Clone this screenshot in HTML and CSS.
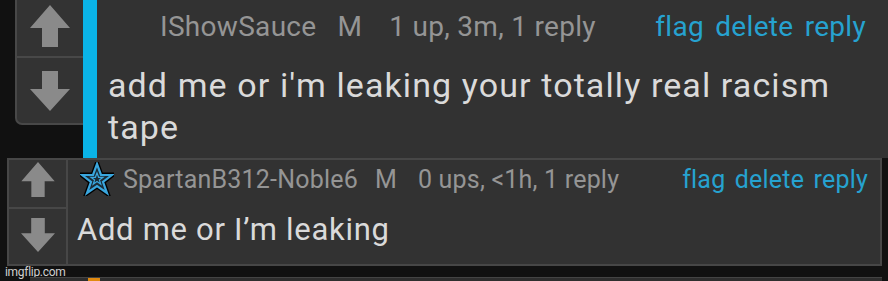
FILE: index.html
```html
<!DOCTYPE html>
<html lang="en">
<head>
    <link rel="stylesheet" href="styles.css">
</head>
<body>
    <div class="thread">
        <div class="comment-row first">
            <div class="votes votes-big">
                <div class="vote up">
                    <svg width="40" height="42" viewBox="0 0 40 42"><path d="M20 0 L40 23 L28 23 L28 42 L12 42 L12 23 L0 23 Z" fill="#8a8a8a"/></svg>
                </div>
                <div class="vote down">
                    <svg width="40" height="40" viewBox="0 0 40 40"><path d="M12 0 L28 0 L28 18 L40 18 L20 40 L0 18 L12 18 Z" fill="#8a8a8a"/></svg>
                </div>
            </div>
            <div class="comment comment-big">
                <div class="comment-head">
                    <div class="meta">
                        <span class="user">IShowSauce</span>
                        <span class="gender">M</span>
                        <span class="stats">1 up, 3m, 1 reply</span>
                    </div>
                    <div class="links">
                        <a>flag</a> <a>delete</a> <a>reply</a>
                    </div>
                </div>
                <div class="comment-text">add me or i'm leaking your totally real racism tape</div>
            </div>
        </div>

        <div class="comment-row second">
            <div class="votes votes-small">
                <div class="vote up">
                    <svg width="34" height="35" viewBox="0 0 40 42"><path d="M20 0 L40 23 L28 23 L28 42 L12 42 L12 23 L0 23 Z" fill="#8a8a8a"/></svg>
                </div>
                <div class="vote down">
                    <svg width="34" height="34" viewBox="0 0 40 40"><path d="M12 0 L28 0 L28 18 L40 18 L20 40 L0 18 L12 18 Z" fill="#8a8a8a"/></svg>
                </div>
            </div>
            <div class="comment comment-small">
                <div class="comment-head">
                    <div class="meta">
                        <svg class="star" width="34" height="34" viewBox="0 0 34 34">
                            <polygon points="17,2 21,13 32,13 23,20 27,31 17,24 7,31 11,20 2,13 13,13" fill="#1c2c36" stroke="#000" stroke-width="5" stroke-linejoin="miter"/>
                            <polygon points="17,2 21,13 32,13 23,20 27,31 17,24 7,31 11,20 2,13 13,13" fill="#1c2c36" stroke="#3aa6dd" stroke-width="2.2"/>
                            <polygon points="17,11 18.6,15.3 23,15.3 19.4,18 20.8,22.3 17,19.6 13.2,22.3 14.6,18 11,15.3 15.4,15.3" fill="none" stroke="#3aa6dd" stroke-width="1.2"/>
                        </svg>
                        <span class="user">SpartanB312-Noble6</span>
                        <span class="gender">M</span>
                        <span class="stats">0 ups, &lt;1h, 1 reply</span>
                    </div>
                    <div class="links">
                        <a>flag</a> <a>delete</a> <a>reply</a>
                    </div>
                </div>
                <div class="comment-text">Add me or I’m leaking</div>
            </div>
        </div>

        <div class="footer">
            <span class="watermark">imgflip.com</span>
        </div>
        <div class="next-card">
            <span class="next-bar"></span>
        </div>
    </div>
</body>
</html>
```

FILE: styles.css
```css
html, body {
    margin: 0;
    padding: 0;
}

body {
    background-color: #111;
    font-family: Roboto, "Liberation Sans", sans-serif;
    width: 888px;
    height: 281px;
    overflow: hidden;
}

.thread {
    display: flex;
    flex-direction: column;
}

.comment-row {
    display: flex;
}

/* first comment */
.comment-row.first {
    height: 158px;
    padding-left: 15px;
    align-items: flex-start;
}

.votes {
    display: flex;
    flex-direction: column;
    background-color: #333;
}

.votes-big {
    width: 68px;
    height: 125px;
    border-left: 2px solid #484848;
    border-bottom: 2px solid #484848;
    border-bottom-left-radius: 7px;
    box-sizing: border-box;
}

.vote {
    display: flex;
    justify-content: center;
    align-items: center;
}

.votes-big .vote {
    height: 58px;
}

.votes-big .vote.up {
    border-bottom: 2px solid #484848;
    align-items: flex-start;
    padding-top: 5px;
    box-sizing: border-box;
}

.votes-big .vote.down {
    flex: 1;
    align-items: flex-start;
    padding-top: 13px;
    box-sizing: border-box;
}

.comment {
    flex: 1;
    background-color: #323232;
    box-sizing: border-box;
}

.comment-big {
    height: 158px;
    border-left: 14px solid #0ab4e8;
    padding: 0 22px 0 11px;
}

.comment-head {
    display: flex;
    justify-content: space-between;
    align-items: center;
}

.meta {
    display: flex;
    align-items: center;
    color: #959595;
}

.links a {
    color: #26a2d0;
    margin-left: 4px;
}

.comment-big .comment-head {
    height: 52px;
    padding-left: 52px;
    font-size: 28px;
    letter-spacing: 0.3px;
}

.comment-big .gender {
    margin-left: 21px;
}

.comment-big .stats {
    margin-left: 27px;
}

.comment-text {
    color: #dadada;
}

.comment-big .comment-text {
    font-size: 34px;
    letter-spacing: 1.1px;
    line-height: 42px;
    padding-top: 12px;
}

/* second comment */
.comment-row.second {
    margin-left: 7px;
    width: 875px;
    height: 108px;
    border: 2px solid #474747;
    box-sizing: border-box;
    background-color: #323232;
}

.votes-small {
    width: 59px;
    border-right: 2px solid #474747;
    box-sizing: border-box;
}

.votes-small .vote {
    height: 49px;
}

.votes-small .vote.up {
    border-bottom: 2px solid #474747;
    align-items: flex-start;
    padding-top: 2px;
    box-sizing: border-box;
}

.votes-small .vote.down {
    flex: 1;
    align-items: flex-start;
    padding-top: 9px;
    box-sizing: border-box;
}

.comment-small {
    padding: 0 12px 0 9px;
}

.comment-small .comment-head {
    height: 38px;
    font-size: 25px;
    letter-spacing: 0.2px;
}

.comment-small .links a {
    margin-left: 3px;
}

.star {
    margin-left: 3px;
    margin-right: 9px;
}

.comment-small .gender {
    margin-left: 17px;
}

.comment-small .stats {
    margin-left: 21px;
}

.comment-small .comment-text {
    font-size: 31px;
    letter-spacing: 0.7px;
    line-height: 40px;
    padding-top: 12px;
}

/* bottom strip */
.footer {
    height: 11px;
    display: flex;
    align-items: center;
}

.watermark {
    font-size: 12px;
    letter-spacing: -0.3px;
    color: #cfcfcf;
    padding-left: 5px;
    margin-top: 1px;
}

.next-card {
    margin-left: 30px;
    width: 852px;
    height: 6px;
    background-color: #2e2e2e;
    border-top: 1px solid #444;
    position: relative;
}

.next-bar {
    position: absolute;
    left: 58px;
    top: 0;
    width: 12px;
    height: 6px;
    background-color: #e08a10;
}
```
